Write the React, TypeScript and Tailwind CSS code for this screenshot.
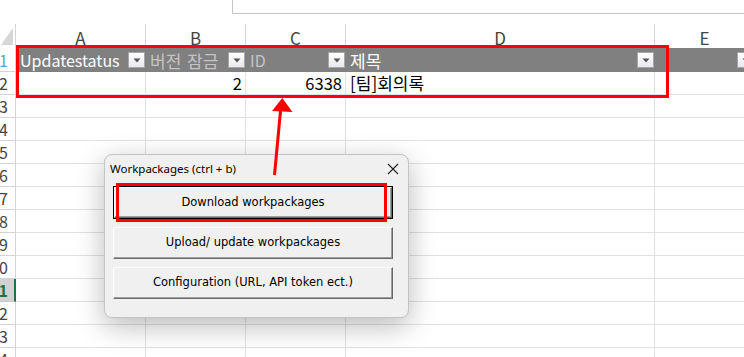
import React from "react";

const sheetFont = { fontFamily: '"Noto Sans CJK KR", "Noto Sans", sans-serif' };

function Drop() {
  return (
    <div className="w-[17px] h-[16px] border border-[#a6a6a6] bg-gradient-to-b from-[#ffffff] to-[#e9e9ee] flex items-center justify-center shrink-0">
      <svg width="8" height="5" viewBox="0 0 8 5">
        <path d="M0.5 0.5 L7.5 0.5 L4 4.5 Z" fill="#555" />
      </svg>
    </div>
  );
}

function RowHead({ n, sel }: { n: number; sel?: boolean }) {
  return (
    <div
      className={
        "w-[16px] shrink-0 overflow-hidden flex items-center justify-end border-b " +
        (sel
          ? "bg-[#d2d2d2] border-r-2 border-r-[#217346] pr-[6px] text-[#217346] font-bold border-b-[#c8c8c8]"
          : "bg-white border-r border-r-[#d4d4d4] pr-[7px] border-b-[#d4d4d4] text-[#444]")
      }
    >
      <span className="text-[16px] leading-none whitespace-nowrap">{n}</span>
    </div>
  );
}

const widths = ["w-[130px]", "w-[100px]", "w-[100px]", "w-[309px]", "w-[100px]"];

function EmptyRow({ n, sel }: { n: number; sel?: boolean }) {
  return (
    <div className="flex h-[23px]">
      <RowHead n={n} sel={sel} />
      {widths.map((w, i) => (
        <div key={i} className={w + " shrink-0 border-r border-b border-[#e1e1e1]"} />
      ))}
    </div>
  );
}

function DlgButton({ label, focus, h }: { label: string; focus?: boolean; h: string }) {
  return (
    <div className={(focus ? "border border-black " : "") + h + " w-[280px] flex"}>
      <div className="flex-1 flex items-center justify-center bg-[#f0f0f0] border-t border-l border-t-white border-l-white border-b border-r border-b-[#696969] border-r-[#696969] shadow-[inset_-1px_-1px_0_#a0a0a0]">
        <span className="text-[11.5px] text-black" style={{ fontFamily: '"DejaVu Sans", "Liberation Sans", sans-serif' }}>
          {label}
        </span>
      </div>
    </div>
  );
}

export default function App() {
  const rows = [3, 4, 5, 6, 7, 8, 9, 10, 11, 12, 13, 14];
  return (
    <div className="relative w-[744px] h-[357px] overflow-hidden bg-white" style={sheetFont}>
      {/* formula bar strip */}
      <div className="h-[24px] flex">
        <div className="ml-[232px] flex-1 h-[14px] border-l border-b border-[#c6c6c6] bg-white" />
      </div>
      {/* column headers */}
      <div className="flex h-[24px] text-[#444]">
        <div className="w-[16px] shrink-0 border-r border-[#d4d4d4] relative">
          <svg width="15" height="24" viewBox="0 0 15 24" className="absolute left-0 top-0">
            <path d="M13 4 L13 21 L1 21 Z" fill="#d6d6d6" />
          </svg>
        </div>
        {["A", "B", "C", "D", "E"].map((c, i) => (
          <div
            key={c}
            className={widths[i] + " shrink-0 border-r border-[#d4d4d4] flex items-center justify-center text-[17px] leading-none pt-[3px]"}
          >
            {c}
          </div>
        ))}
      </div>
      {/* table header row 1 */}
      <div className="flex h-[24px]">
        <div className="w-[16px] shrink-0 border-r border-b border-[#d4d4d4] overflow-hidden flex items-center justify-end pr-[7px] text-[#5aa6c8]">
          <span className="text-[16px] leading-none">1</span>
        </div>
        <div className="flex-1 flex bg-[#808080] text-[16px] leading-none">
          <div className="w-[130px] shrink-0 flex items-center justify-between pl-[4px] pr-[1px]">
            <span className="text-white leading-none">Updatestatus</span>
            <Drop />
          </div>
          <div className="w-[100px] shrink-0 flex items-center justify-between pl-[4px] pr-[1px]">
            <span className="text-[#c4c4c4] text-[17px] leading-none [word-spacing:2px]">버전 잠금</span>
            <Drop />
          </div>
          <div className="w-[100px] shrink-0 flex items-center justify-between pl-[4px] pr-[1px]">
            <span className="text-[#c4c4c4] leading-none">ID</span>
            <Drop />
          </div>
          <div className="w-[309px] shrink-0 flex items-center justify-between pl-[4px] pr-[1px]">
            <span className="text-white text-[17px] leading-none">제목</span>
            <Drop />
          </div>
          <div className="w-[100px] shrink-0 flex items-center justify-end pr-[1px]">
            <Drop />
          </div>
        </div>
      </div>
      {/* data row 2 */}
      <div className="flex h-[23px] text-[16.5px] text-black">
        <RowHead n={2} />
        <div className="w-[130px] shrink-0 border-r border-b border-[#e1e1e1]" />
        <div className="w-[100px] shrink-0 border-r border-b border-[#e1e1e1] flex items-center justify-end pr-[3px]">2</div>
        <div className="w-[100px] shrink-0 border-r border-b border-[#e1e1e1] flex items-center justify-end pr-[3px]">6338</div>
        <div className="w-[309px] shrink-0 border-r border-b border-[#e1e1e1] flex items-center pl-[4px] text-[17px]">[팀]회의록</div>
        <div className="w-[100px] shrink-0 border-r border-b border-[#e1e1e1]" />
      </div>
      {rows.map((n) => (
        <EmptyRow key={n} n={n} sel={n === 11} />
      ))}

      {/* red highlight over table */}
      <div className="absolute left-[16px] top-[45px] w-[653px] h-[53px] border-[3px] border-[#ff0000]" />

      {/* dialog */}
      <div className="absolute left-[104px] top-[154px] w-[305px] h-[164px] rounded-[8px] bg-[#f0f0f0] border border-[#c4c4c4] shadow-[0_8px_28px_rgba(0,0,0,0.28)] flex flex-col">
        <div className="h-[26px] flex items-center justify-between pl-[5px] pr-[9px] pt-[1px]">
          <span className="text-[11.5px] text-black" style={{ fontFamily: '"Noto Sans", sans-serif' }}>
            Workpackages (ctrl + b)
          </span>
          <svg width="12" height="12" viewBox="0 0 12 12">
            <path d="M1 1 L11 11 M11 1 L1 11" stroke="#222" strokeWidth="1.1" />
          </svg>
        </div>
        <div className="flex flex-col gap-[8px] pl-[8px] pt-[5px]">
          <DlgButton label="Download workpackages" focus h="h-[33px]" />
          <DlgButton label="Upload/ update workpackages" h="h-[32px]" />
          <DlgButton label="Configuration (URL, API token ect.)" h="h-[32px]" />
        </div>
      </div>

      {/* red highlight over download button */}
      <div className="absolute left-[116px] top-[183px] w-[271px] h-[39px] border-[3px] border-[#ff0000]" />

      {/* arrow */}
      <svg className="absolute left-0 top-0 pointer-events-none" width="744" height="357" viewBox="0 0 744 357">
        <line x1="274.5" y1="175" x2="280.8" y2="108" stroke="#ff0000" strokeWidth="3" />
        <polygon points="282.3,98 272,111 292.5,112" fill="#ff0000" />
      </svg>
    </div>
  );
}
